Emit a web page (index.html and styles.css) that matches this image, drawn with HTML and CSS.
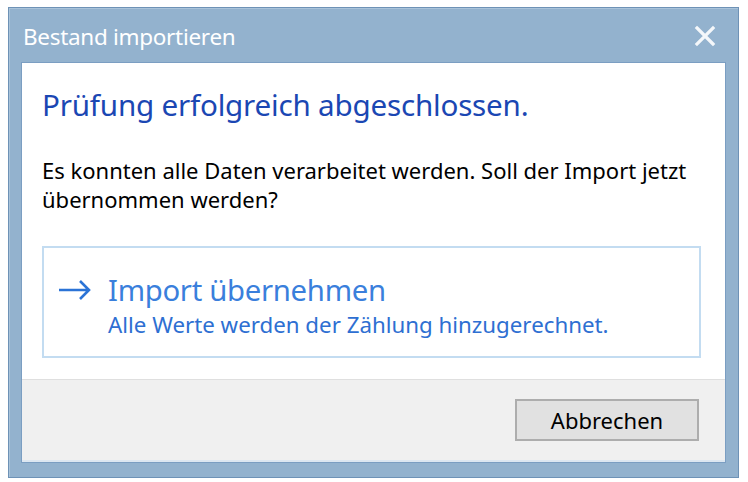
FILE: index.html
```html
<!DOCTYPE html>
<html lang="de">
<head>
  <meta charset="UTF-8">
  <title>Bestand importieren</title>
  <link rel="stylesheet" href="styles.css">
</head>
<body>
  <div class="window">
    <div class="titlebar">
      <span class="title">Bestand importieren</span>
      <svg class="close" width="22" height="22" viewBox="0 0 22 22">
        <path d="M3 3 L19 19 M19 3 L3 19" stroke="#f4f7fa" stroke-width="3.2" stroke-linecap="square"/>
      </svg>
    </div>

    <div class="client">
      <div class="content">
        <h1 class="main-instruction">Prüfung erfolgreich abgeschlossen.</h1>
        <p class="message">Es konnten alle Daten verarbeitet werden. Soll der Import jetzt übernommen werden?</p>

        <!-- Command link -->
        <div class="command-link">
          <svg class="arrow" width="34" height="24" viewBox="0 0 34 24">
            <path d="M1 12 H31 M22 3 L31 12 L22 21" fill="none" stroke="#2b73d6" stroke-width="2.6"/>
          </svg>
          <div class="command-text">
            <div class="command-title">Import übernehmen</div>
            <div class="command-note">Alle Werte werden der Zählung hinzugerechnet.</div>
          </div>
        </div>
      </div>

      <div class="footer">
        <button class="btn">Abbrechen</button>
      </div>
    </div>
  </div>
</body>
</html>
```

FILE: styles.css
```css
* {
  margin: 0;
  padding: 0;
  box-sizing: border-box;
}

body {
  background: #ffffff;
  font-family: 'Noto Sans', 'Open Sans', sans-serif;
}

/* Window frame */
.window {
  margin: 7px 0 0 8px;
  width: 731px;
  height: 471px;
  background: #93b2ce;
  border: 1px solid #6e92b6;
  box-shadow: inset 1px 1px 0 #a9c3da;
  display: flex;
  flex-direction: column;
}

.titlebar {
  height: 54px;
  display: flex;
  align-items: center;
  justify-content: space-between;
  padding: 2px 22px 0 14px;
}

.title {
  color: #ffffff;
  font-size: 22.5px;
  letter-spacing: -0.3px;
}

.client {
  flex: 1;
  margin: 0 12px 14px 12px;
  border: 1px solid #7b9ec2;
  background: #ffffff;
  display: flex;
  flex-direction: column;
}

.content {
  flex: 1;
  padding: 24px 24px 0 20px;
}

.main-instruction {
  font-weight: normal;
  font-size: 29.6px;
  line-height: 36px;
  color: #1b47b3;
  letter-spacing: -0.2px;
}

.message {
  margin-top: 33px;
  font-size: 22px;
  line-height: 29px;
  color: #000000;
}

/* Command link */
.command-link {
  margin-top: 32px;
  height: 112px;
  border: 2px solid #c3dcf1;
  display: flex;
  align-items: flex-start;
  padding: 25px 0 0 14px;
}

.arrow {
  margin-top: 5px;
  margin-right: 16px;
}

.command-title {
  font-size: 29.3px;
  line-height: 34px;
  color: #3a7fdc;
  letter-spacing: -0.3px;
}

.command-note {
  margin-top: 5px;
  font-size: 22.3px;
  line-height: 26px;
  color: #2e6fd2;
}

/* Footer */
.footer {
  height: 83px;
  background: #f0f0f0;
  border-top: 1px solid #dfdfdf;
  border-bottom: 2px solid #dde7f1;
  display: flex;
  justify-content: flex-end;
  align-items: flex-start;
  padding: 19px 26px 0 0;
}

.btn {
  width: 184px;
  height: 42px;
  background: #e1e1e1;
  border: 2px solid #adadad;
  font-family: 'Noto Sans', 'Open Sans', sans-serif;
  font-size: 22px;
  color: #000000;
}
```
